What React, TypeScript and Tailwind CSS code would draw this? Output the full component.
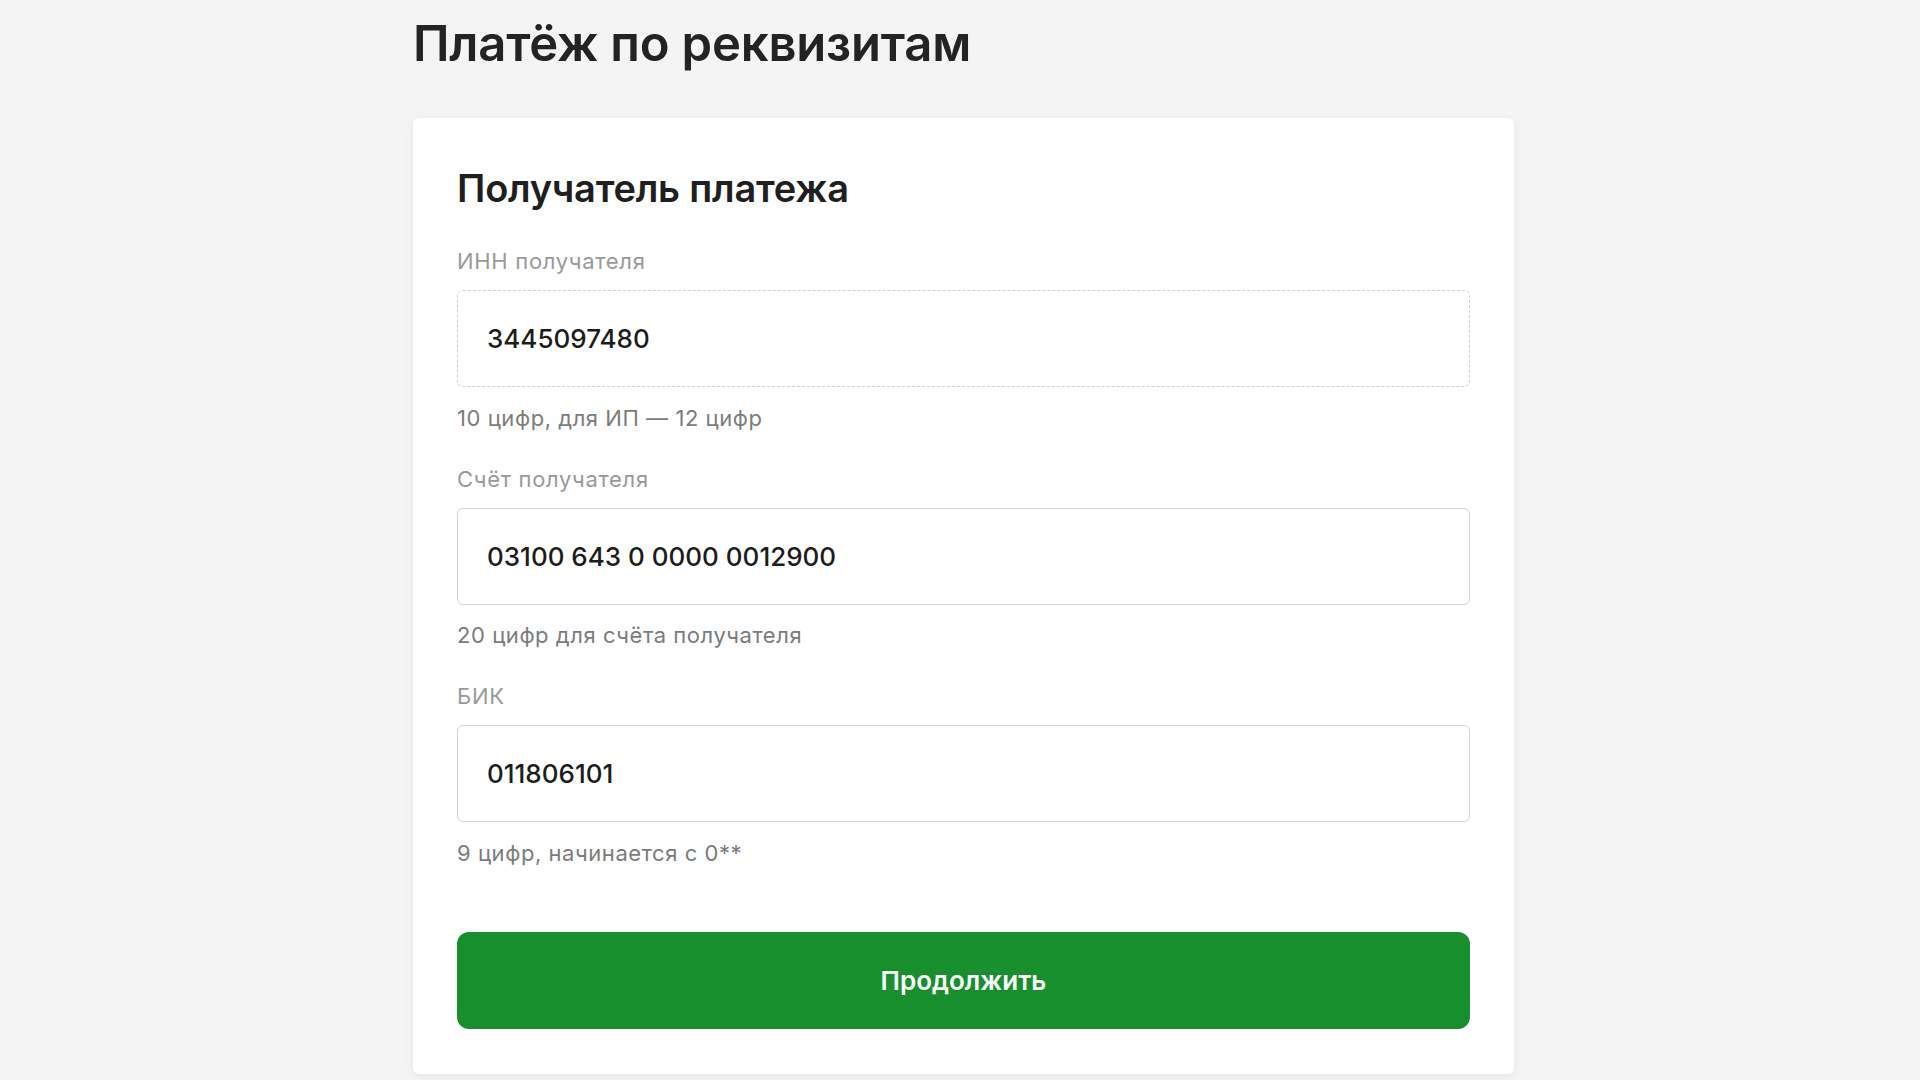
import React from 'react';

interface Field {
  label: string;
  value: string;
  hint: string;
  dashed?: boolean;
}

const fields: Field[] = [
  { label: 'ИНН получателя', value: '3445097480', hint: '10 цифр, для ИП — 12 цифр', dashed: true },
  { label: 'Счёт получателя', value: '03100 643 0 0000 0012900', hint: '20 цифр для счёта получателя' },
  { label: 'БИК', value: '011806101', hint: '9 цифр, начинается с 0**' },
];

export default function App() {
  return (
    <div className="min-h-screen bg-[#f4f4f4] font-['Inter',sans-serif] text-[#222222]">
      <div className="ml-[413px] w-[1101px] pt-[20px]">
        <h1 className="text-[49px] font-semibold leading-[48px] tracking-[-0.2px] text-[#232323]">
          Платёж по реквизитам
        </h1>

        <div className="mt-[50px] rounded-[6px] bg-white px-[44px] pt-[50px] pb-[45px] shadow-[0_2px_10px_rgba(0,0,0,0.07)]">
          <h2 className="text-[38px] font-semibold leading-[40px] tracking-[-0.2px] text-[#1f1f1f]">
            Получатель платежа
          </h2>

          <div className="mt-[42px] flex flex-col">
            {fields.map((f, i) => (
              <div key={f.label} className={i === 0 ? '' : 'mt-[39px]'}>
                <label className="block text-[22px] leading-[22px] tracking-[0.7px] text-[#9a9a9a]">
                  {f.label}
                </label>
                <div
                  className={
                    'mt-[18px] flex h-[97px] items-center rounded-[6px] border bg-white pl-[29px] ' +
                    (f.dashed ? 'border-dashed border-[#cfcfcf]' : 'border-solid border-[#d2d2d2]')
                  }
                >
                  <input
                    readOnly
                    defaultValue={f.value}
                    className="w-full bg-transparent text-[26px] font-medium text-[#1c1c1c] outline-none"
                  />
                </div>
                <p className="mt-[19.5px] text-[22px] leading-[22px] tracking-[0.55px] text-[#7c7c7c]">{f.hint}</p>
              </div>
            ))}
          </div>

          <button className="mt-[68px] flex h-[97px] w-full items-center justify-center rounded-[12px] bg-[#178f2d] text-[26px] font-semibold text-white">
            Продолжить
          </button>
        </div>
      </div>
    </div>
  );
}
